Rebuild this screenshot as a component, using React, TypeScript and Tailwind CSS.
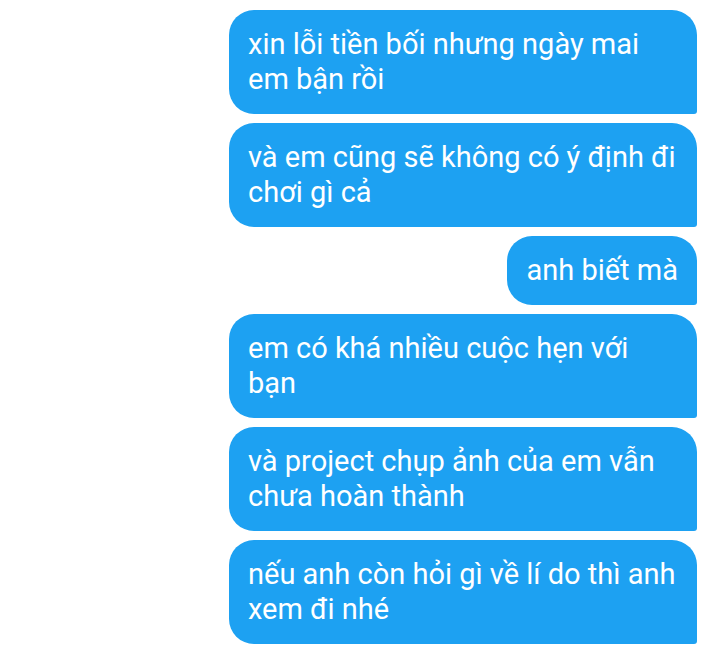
import React from 'react';

const messages: string[][] = [
  ['xin lỗi tiền bối nhưng ngày mai', 'em bận rồi'],
  ['và em cũng sẽ không có ý định đi', 'chơi gì cả'],
  ['anh biết mà'],
  ['em có khá nhiều cuộc hẹn với', 'bạn'],
  ['và project chụp ảnh của em vẫn', 'chưa hoàn thành'],
  ['nếu anh còn hỏi gì về lí do thì anh', 'xem đi nhé'],
];

const App: React.FC = () => {
  return (
    <div className="min-h-[648px] w-[720px] bg-white font-['Roboto',sans-serif] overflow-hidden">
      <div className="flex flex-col items-end gap-[9px] pt-[10px] pr-[23px]">
        {messages.map((lines, i) => (
          <div
            key={i}
            className={
              lines.length > 1
                ? 'w-[468px] bg-[#1da1f2] text-white rounded-t-[25px] rounded-bl-[25px] rounded-br-[3px] pl-[19px] pr-[19px] pt-[17px] pb-[17px] text-[29px] leading-[35px]'
                : 'bg-[#1da1f2] text-white rounded-t-[25px] rounded-bl-[25px] rounded-br-[3px] pl-[19px] pr-[19px] pt-[17px] pb-[17px] text-[29px] leading-[35px]'
            }
          >
            {lines.map((line, j) => (
              <div key={j} className="whitespace-nowrap">
                {line}
              </div>
            ))}
          </div>
        ))}
      </div>
    </div>
  );
};

export default App;
